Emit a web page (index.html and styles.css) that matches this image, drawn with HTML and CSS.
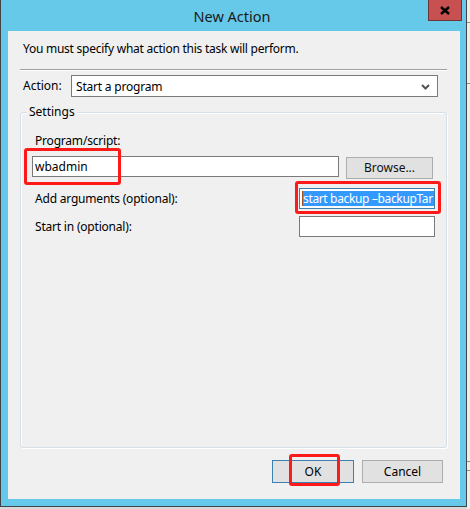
FILE: index.html
```html
<!DOCTYPE html>
<html>
<head>
<meta charset="utf-8">
<link rel="stylesheet" href="styles.css">
</head>
<body>
<div class="screen">
  <div class="window">
    <div class="titlebar">
      <span class="title">New Action</span>
      <div class="close">
        <svg width="10" height="9" viewBox="0 0 10 9"><path d="M1 1 L9 8 M9 1 L1 8" stroke="#000" stroke-width="2.4" fill="none"/></svg>
      </div>
    </div>
    <div class="client">
      <p class="intro">You must specify what action this task will perform.</p>
      <div class="sep"></div>
      <div class="action-row">
        <span class="action-label">Action:</span>
        <div class="combo">
          <span>Start a program</span>
          <svg class="chev" width="9" height="6" viewBox="0 0 9 6"><path d="M1 1 L4.5 4.5 L8 1" stroke="#555" stroke-width="2" fill="none"/></svg>
        </div>
      </div>
      <div class="group">
        <div class="legend">Settings</div>
        <div class="field-label">Program/script:</div>
        <div class="prog-row">
          <div class="tb prog">wbadmin</div>
          <div class="btn browse">Browse...</div>
        </div>
        <div class="opt-row">
          <span class="opt-label">Add arguments (optional):</span>
          <div class="tb arg focus"><span class="caret"></span><span class="sel">start backup –backupTar</span></div>
        </div>
        <div class="opt-row second">
          <span class="opt-label">Start in (optional):</span>
          <div class="tb arg"></div>
        </div>
      </div>
      <div class="buttons">
        <div class="btn ok">OK</div>
        <div class="btn cancel">Cancel</div>
      </div>
      <div class="mark m-prog"></div>
      <div class="mark m-arg"></div>
      <div class="mark m-ok"></div>
    </div>
  </div>
  <div class="behind">
    <div class="bl l1"></div>
    <div class="bl l2"></div>
    <div class="bl l3"></div>
    <div class="bl l4"></div>
  </div>
</div>
</body>
</html>
```

FILE: styles.css
```css
* { box-sizing: border-box; }
html, body { margin: 0; padding: 0; }
body {
  width: 470px;
  height: 509px;
  background: #d9d9d9;
  font-family: "Noto Sans", "Open Sans", sans-serif;
  font-size: 12px;
  color: #000;
  overflow: hidden;
}
.screen {
  display: flex;
  height: 509px;
}
.window {
  width: 467px;
  height: 507px;
  background: #66c9ea;
  border-left: 1px solid #3f4448;
  border-right: 1px solid #3f4448;
  border-bottom: 1px solid #3f4448;
  position: relative;
  display: flex;
  flex-direction: column;
}
.titlebar {
  height: 31px;
  position: relative;
  display: flex;
  justify-content: center;
  align-items: center;
}
.title {
  font-size: 14.5px;
  color: #1a1a1a;
  margin-left: -3px;
  margin-top: 1px;
}
.close {
  position: absolute;
  left: 427px;
  top: 0;
  width: 34px;
  height: 21px;
  background: #c75050;
  border: 1px solid #6b3535;
  border-top: none;
  display: flex;
  align-items: center;
  justify-content: center;
}
.client {
  margin-left: 7px;
  width: 452px;
  height: 468px;
  background: #f0f0f0;
  padding: 10px 13px 0 12px;
  position: relative;
}
.intro {
  margin: 0 0 0 3px;
  line-height: 16px;
  height: 16px;
  white-space: nowrap;
  letter-spacing: -0.25px;
}
.sep {
  margin-top: 12px;
  height: 2px;
  border-top: 1px solid #a0a0a0;
  border-bottom: 1px solid #ffffff;
}
.action-row {
  margin-top: 4px;
  display: flex;
  align-items: center;
  height: 22px;
}
.action-label {
  width: 51px;
  padding-left: 3px;
  line-height: 16px;
}
.combo {
  width: 367px;
  height: 22px;
  background: #fff;
  border: 1px solid #7a7a7a;
  display: flex;
  align-items: center;
  justify-content: space-between;
  padding: 0 7px 0 4px;
  letter-spacing: -0.2px;
}
.chev { margin-top: 1px; }
.group {
  margin-top: 15px;
  height: 336px;
  border: 1px solid #d5dfe5;
  border-radius: 3px;
  box-shadow: inset 1px 1px 0 #fff, 1px 1px 0 #fff;
  padding: 0 11px 0 11px;
}
.legend {
  width: fit-content;
  margin: -9px 0 0 -5px;
  padding: 0 2px;
  background: #f0f0f0;
  line-height: 16px;
  height: 16px;
}
.field-label {
  margin: 13px 0 0 3px;
  line-height: 16px;
  height: 16px;
  letter-spacing: -0.2px;
}
.prog-row {
  margin-top: 7px;
  display: flex;
  align-items: flex-start;
  gap: 7px;
}
.tb {
  height: 21px;
  background: #fff;
  border: 1px solid #7a7a7a;
  line-height: 19px;
  white-space: nowrap;
  overflow: hidden;
}
.prog {
  width: 307px;
  padding-left: 2px;
}
.btn {
  background: #e1e1e1;
  border: 1px solid #adadad;
  display: flex;
  align-items: center;
  justify-content: center;
  line-height: 16px;
}
.browse {
  width: 87px;
  height: 22px;
  margin-top: 1px;
  color: #111;
}
.opt-row {
  margin-top: 9px;
  display: flex;
  align-items: center;
  justify-content: space-between;
  height: 21px;
}
.opt-row.second { margin-top: 7px; }
.opt-label {
  margin-left: 3px;
  line-height: 16px;
  letter-spacing: -0.2px;
}
.arg {
  width: 136px;
  display: flex;
  align-items: center;
  padding-left: 2px;
}
.arg.focus { border-color: #3c7fb1; }
.caret {
  width: 1px;
  height: 15px;
  background: #a05020;
  flex: none;
}
.sel {
  background: #3399ff;
  color: #fff;
  line-height: 15px;
  height: 15px;
  letter-spacing: -0.35px;
  padding-right: 1px;
}
.buttons {
  margin-top: 12px;
  display: flex;
  justify-content: flex-end;
  gap: 8px;
  padding-right: 4px;
}
.ok {
  width: 82px;
  height: 23px;
  border-color: #3c7fb1;
}
.cancel {
  width: 81px;
  height: 23px;
}
.mark {
  position: absolute;
  border: 3px solid #ff1a1a;
  border-radius: 3px;
}
.m-prog { left: 16px; top: 117px; width: 97px; height: 37px; }
.m-arg { left: 287px; top: 150px; width: 146px; height: 33px; }
.m-ok { left: 281px; top: 423px; width: 51px; height: 32px; }
.behind {
  width: 3px;
  height: 509px;
  background: #eeeeee;
  position: relative;
}
.bl { position: absolute; left: 0; width: 3px; height: 1px; background: #8a8a8a; }
.l1 { top: 22px; }
.l2 { top: 83px; }
.l3 { top: 461px; }
.l4 { top: 470px; }
```
